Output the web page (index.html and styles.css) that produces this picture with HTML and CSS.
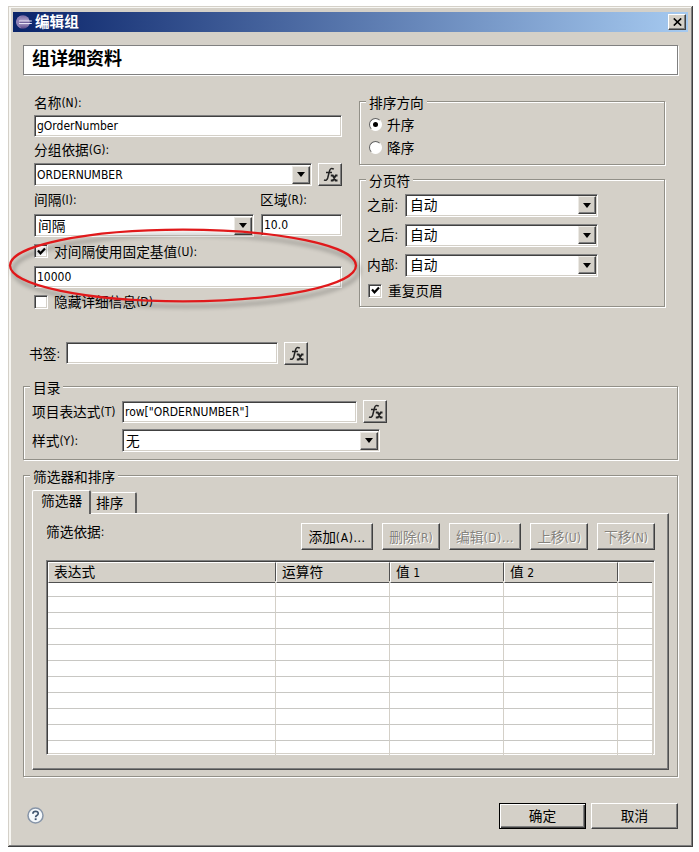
FILE: index.html
```html
<!DOCTYPE html>
<html lang="zh-CN">
<head>
<meta charset="utf-8">
<title>编辑组</title>
<link rel="stylesheet" href="styles.css">
</head>
<body>
<div class="dialog">
  <header class="titlebar">
    <svg class="logo" viewBox="0 0 16 16"><defs><linearGradient id="lg" x1="0" y1="0" x2="0" y2="1"><stop offset="0" stop-color="#7466a2"/><stop offset=".5" stop-color="#b9add2"/><stop offset="1" stop-color="#564485"/></linearGradient></defs><circle cx="7" cy="8" r="6.800" fill="url(#lg)"/><path d="M5.500 1.400Q0 3 .2 8.200Q1 13 5.500 14.600Q3 12 3 8T5.500 1.400Z" fill="#8f80b5"/><path d="M3 7H15.800M3 9.500H15.800" stroke="#e9e4f4" stroke-width="1.200"/><path d="M3.500 8.250H14" stroke="#5c4d8c" stroke-width="1"/></svg>
    <h1>编辑组</h1>
    <button class="close"><svg viewBox="0 0 9 8"><path d="M.8.500 8.200 7.500M8.200.500.8 7.500" stroke="#000" stroke-width="1.700"/></svg></button>
  </header>
  <div class="banner">组详细资料</div>

  <main class="columns">
    <section class="left">
      <label class="h25">名称<i>(N):</i></label>
      <div class="field"><i>gOrderNumber</i></div>
      <label class="h26">分组依据<i>(G):</i></label>
      <div class="line">
        <div class="combo w278"><i>ORDERNUMBER</i><span class="arrow"></span></div>
        <button class="fx"><svg viewBox="0 0 18 18"><path d="M12.800 3.200Q9.500 1.200 8.500 5L6.700 12Q5.800 15.200 3 13.800M5 6.500H11" fill="none" stroke="#222" stroke-width="1.500"/><path d="M9.800 9.500h2l2.700 5h2M16.500 9.500h-1.800l-2.900 5H9.800" fill="none" stroke="#222" stroke-width="1.800"/></svg></button>
      </div>
      <div class="line h28"><label class="w226">间隔<i>(I):</i></label><label>区域<i>(R):</i></label></div>
      <div class="line">
        <div class="combo w220"><span class="value">间隔</span><span class="arrow"></span></div>
        <div class="field w80"><i>10.0</i></div>
      </div>
      <label class="check h29"><span class="box"><svg viewBox="0 0 9 9"><path d="M1 3.500 3.500 6.300 8 1.500" fill="none" stroke="#000" stroke-width="2.200"/></svg></span>对间隔使用固定基值<i>(U):</i></label>
      <div class="field"><i>10000</i></div>
      <label class="check h28"><span class="box"></span>隐藏详细信息<i>(D)</i></label>
    </section>

    <section class="right">
      <div class="group sort">
        <div class="legend">排序方向</div>
        <label class="choice"><span class="radio on"></span>升序</label>
        <label class="choice"><span class="radio"></span>降序</label>
      </div>
      <div class="group breaks">
        <div class="legend">分页符</div>
        <div class="pair"><label>之前<i>:</i></label><div class="combo"><span class="value">自动</span><span class="arrow"></span></div></div>
        <div class="pair"><label>之后<i>:</i></label><div class="combo"><span class="value">自动</span><span class="arrow"></span></div></div>
        <div class="pair"><label>内部<i>:</i></label><div class="combo"><span class="value">自动</span><span class="arrow"></span></div></div>
        <label class="check repeat"><span class="box"><svg viewBox="0 0 9 9"><path d="M1 3.500 3.500 6.300 8 1.500" fill="none" stroke="#000" stroke-width="2.200"/></svg></span>重复页眉</label>
      </div>
    </section>
  </main>

  <div class="bookmark">
    <label>书签<i>:</i></label>
    <div class="field"></div>
    <button class="fx"><svg viewBox="0 0 18 18"><path d="M12.800 3.200Q9.500 1.200 8.500 5L6.700 12Q5.800 15.200 3 13.800M5 6.500H11" fill="none" stroke="#222" stroke-width="1.500"/><path d="M9.800 9.500h2l2.700 5h2M16.500 9.500h-1.800l-2.900 5H9.800" fill="none" stroke="#222" stroke-width="1.800"/></svg></button>
  </div>

  <div class="group toc">
    <div class="legend">目录</div>
    <div class="trow"><label>项目表达式<i>(T)</i></label><div class="field"><i>row["ORDERNUMBER"]</i></div><button class="fx"><svg viewBox="0 0 18 18"><path d="M12.800 3.200Q9.500 1.200 8.500 5L6.700 12Q5.800 15.200 3 13.800M5 6.500H11" fill="none" stroke="#222" stroke-width="1.500"/><path d="M9.800 9.500h2l2.700 5h2M16.500 9.500h-1.800l-2.900 5H9.800" fill="none" stroke="#222" stroke-width="1.800"/></svg></button></div>
    <div class="trow"><label>样式<i>(Y):</i></label><div class="combo"><span class="value">无</span><span class="arrow"></span></div></div>
  </div>

  <div class="group filters">
    <div class="legend">筛选器和排序</div>
    <div class="tabs"><div class="tab active">筛选器</div><div class="tab">排序</div></div>
    <div class="panel">
      <div class="toolbar">
        <label>筛选依据<i>:</i></label>
        <button class="btn w72">添加<i>(A)...</i></button>
        <button class="btn off w58">删除<i>(R)</i></button>
        <button class="btn off w72">编辑<i>(D)...</i></button>
        <button class="btn off w58">上移<i>(U)</i></button>
        <button class="btn off w58">下移<i>(N)</i></button>
      </div>
      <div class="table">
        <div class="tr head"><div>表达式</div><div>运算符</div><div>值<i> 1</i></div><div>值<i> 2</i></div><div></div></div>
        <div class="tr first"><div></div><div></div><div></div><div></div><div></div></div>
        <div class="tr"><div></div><div></div><div></div><div></div><div></div></div>
        <div class="tr"><div></div><div></div><div></div><div></div><div></div></div>
        <div class="tr"><div></div><div></div><div></div><div></div><div></div></div>
        <div class="tr"><div></div><div></div><div></div><div></div><div></div></div>
        <div class="tr"><div></div><div></div><div></div><div></div><div></div></div>
        <div class="tr"><div></div><div></div><div></div><div></div><div></div></div>
        <div class="tr"><div></div><div></div><div></div><div></div><div></div></div>
        <div class="tr"><div></div><div></div><div></div><div></div><div></div></div>
        <div class="tr"><div></div><div></div><div></div><div></div><div></div></div>
        <div class="tr last"><div></div><div></div><div></div><div></div><div></div></div>
      </div>
    </div>
  </div>

  <footer class="footer">
    <svg class="help" viewBox="0 0 17 17"><circle cx="8.500" cy="8.500" r="7.500" fill="#f5f9fc" stroke="#8795a8" stroke-width="1.500"/><path d="M5.900 6.700Q6 4.400 8.600 4.400T11.200 6.500Q11.200 7.700 9.800 8.500 8.600 9.200 8.600 10.300" fill="none" stroke="#40566f" stroke-width="1.700"/><rect x="7.700" y="11.300" width="1.900" height="1.800" fill="#40566f"/></svg>
    <button class="btn default">确定</button>
    <button class="btn">取消</button>
  </footer>

  <svg class="callout" viewBox="0 0 360 86"><ellipse cx="177" cy="40.500" rx="173" ry="35.800" fill="none" stroke="#e0191b" stroke-width="2.300"/></svg>
</div>
</body>
</html>
```

FILE: styles.css
```css
* { box-sizing: border-box; }

body {
  margin: 0;
  background: #fff;
  color: #000;
  font: 13.7px/18px "Noto Sans CJK SC", sans-serif;
}

i {
  font: normal 12px/18px "DejaVu Sans Condensed", "DejaVu Sans", sans-serif;
  font-stretch: condensed;
  white-space: pre;
}

button { font: inherit; color: inherit; padding: 0; margin: 0; }

label { display: flex; align-items: center; white-space: nowrap; padding-bottom: 2px; }
label i { padding-top: 2px; }

.dialog {
  position: relative;
  width: 685px;
  height: 841px;
  margin: 6px 0 0 8px;
  padding: 6px 5px 0;
  background: #d4d0c8;
  box-shadow: inset -1px -1px #404040, inset 1px 1px #d4d0c8, inset -2px -2px #808080, inset 3px 2px #f7f6f2;
}

.titlebar {
  display: flex;
  align-items: center;
  height: 20px;
  padding: 0 2px 0 3px;
  background: linear-gradient(90deg, #0a246a, #a6caf0);
  color: #fff;
}
.logo { width: 16px; height: 16px; }
.titlebar h1 { margin: 0 auto 0 3px; font-size: 14.6px; line-height: 18px; padding-bottom: 2px; font-weight: 700; }
.close {
  display: flex;
  align-items: center;
  justify-content: center;
  width: 18px;
  height: 16px;
  background: #d4d0c8;
  border: 1px solid;
  border-color: #fff #404040 #404040 #fff;
  box-shadow: inset -1px -1px #808080;
}
.close svg { width: 9px; height: 8px; }

.banner {
  height: 30px;
  margin: 13px 10px 0;
  padding-left: 8px;
  background: #fff;
  border: 1px solid #808080;
  box-shadow: 1px 1px #fff;
  font-size: 18px;
  font-weight: 700;
  line-height: 22px;
}

.columns { display: flex; gap: 17px; height: 267px; padding: 15px 0 0 21px; }
.left { width: 308px; }
.right { width: 306px; padding-top: 11px; }
.line { display: flex; justify-content: space-between; }
.h25 { height: 25px; }
.h26 { height: 26px; }
.h28 { height: 28px; }
.h29 { height: 29px; }
.w226 { width: 226px; }
.line.h28 { justify-content: flex-start; }

.field, .combo {
  display: flex;
  align-items: center;
  height: 22px;
  padding-left: 2px;
  background: #fff;
  border: 1px solid;
  border-color: #808080 #fff #fff #808080;
  box-shadow: inset 1px 1px #404040, inset -1px -1px #d4d0c8;
}
.combo { height: 23px; justify-content: space-between; padding: 0 1px 0 2px; }
.value { padding: 0 0 2px 1px; }
.w278 { width: 278px; }
.w220 { width: 220px; }
.w80 { width: 81px; }

.arrow {
  display: flex;
  align-items: center;
  justify-content: center;
  width: 18px;
  height: 18px;
  background: #d4d0c8;
  border: 1px solid;
  border-color: #eceae5 #404040 #404040 #eceae5;
  box-shadow: inset -1px -1px #808080;
}
.arrow::before { content: ""; border: solid transparent; border-width: 5px 4.5px 0; border-top-color: #000; }

.fx {
  display: flex;
  align-items: center;
  justify-content: center;
  width: 24px;
  height: 23px;
  background: #d4d0c8;
  border: 1px solid;
  border-color: #fff #404040 #404040 #fff;
  box-shadow: inset -1px -1px #808080;
}
.fx svg { width: 18px; height: 18px; }

.box {
  display: flex;
  align-items: center;
  justify-content: center;
  width: 14px;
  height: 14px;
  margin: 1px 6px 0 0;
  background: #fff;
  border: 1px solid;
  border-color: #808080 #fff #fff #808080;
  box-shadow: inset 1px 1px #404040, inset -1px -1px #d4d0c8;
}
.box svg { width: 9px; height: 9px; }

.group {
  border: 1px solid #929088;
  box-shadow: 1px 1px #fff, inset 1px 1px #fff;
}
.legend {
  width: max-content;
  height: 18px;
  margin: -8px 0 0 6px;
  padding: 0 3px;
  background: #d4d0c8;
  line-height: 16px;
}
.sort { height: 64px; }
.choice { height: 23px; padding: 0 0 1px 9px; }
.sort .legend + .choice { margin-top: 1px; }
.radio {
  display: flex;
  align-items: center;
  justify-content: center;
  width: 13px;
  height: 13px;
  margin-right: 5px;
  border-radius: 50%;
  background: #fff;
  border: 1px solid;
  border-color: #606060 #fff #fff #606060;
}
.on::before { content: ""; width: 5px; height: 5px; border-radius: 50%; background: #000; }

.breaks { height: 128px; margin-top: 14px; padding-left: 7px; }
.breaks .legend { margin-left: -1px; }
.pair { display: flex; align-items: center; height: 30px; }
.pair label { width: 38px; }
.pair .combo { width: 193px; padding-left: 3px; }
.repeat { height: 22px; padding-left: 1px; }

.bookmark { display: flex; padding-left: 16px; height: 23px; }
.bookmark label { width: 37px; }
.bookmark .field { width: 212px; margin-right: 6px; }

.toc { height: 74px; margin: 21px 10px 0; padding-left: 8px; }
.toc .legend, .filters .legend { margin-left: -2px; }
.trow { display: flex; align-items: center; height: 29px; }
.trow label { width: 90px; }
.trow .field { width: 235px; margin-right: 6px; }
.trow .combo { width: 258px; }

.filters { height: 302px; margin: 15px 10px 0; padding: 0 8px; }
.tabs { display: flex; align-items: flex-end; height: 24px; margin-top: 4px; }
.tab {
  width: 46px;
  height: 21px;
  padding: 0 0 0 4px;
  border: 1px solid;
  border-color: #fff #606060 transparent transparent;
  border-right-width: 2px;
  border-bottom: 0;
  border-radius: 2px 2px 0 0;
  margin-bottom: 1px;
}
.tab.active {
  position: relative;
  z-index: 1;
  width: 59px;
  height: 24px;
  margin-bottom: 0;
  padding: 0 0 0 8px;
  background: #d4d0c8;
  border-left-color: #fff;
}
.panel {
  height: 257px;
  margin-top: -1px;
  padding: 9px 13px 0 13px;
  border: 1px solid;
  border-color: #fff #505050 #505050 #fff;
  box-shadow: inset -1px -1px #808080;
}
.toolbar { display: flex; gap: 9px; height: 27px; }
.toolbar label { margin-right: auto; height: 18px; }
.btn {
  height: 27px;
  background: #d4d0c8;
  border: 1px solid;
  border-color: #fff #404040 #404040 #fff;
  box-shadow: inset -1px -1px #808080;
  line-height: 23px;
  padding-bottom: 1px;
  white-space: nowrap;
}
.w72 { width: 72px; }
.w58 { width: 58px; }
.w72 i { letter-spacing: .6px; }
.off { color: #85837d; text-shadow: 1px 1px #fff; }

.table {
  height: 195px;
  margin-top: 10px;
  background: #fff;
  border: 1px solid;
  border-color: #808080 #fff #fff #808080;
  box-shadow: inset 1px 1px #404040, inset -1px -1px #d4d0c8;
  padding: 1px 1px 0 1px;
}
.tr { display: grid; grid-template-columns: 228px 114px 114px 114px 1fr; height: 16px; }
.tr div { border-right: 1px solid #d4d0c8; border-bottom: 1px solid #c8c7c3; }
.tr.last div { border-bottom: 0; }
.tr.head { height: 19px; }
.head div {
  padding-left: 5px;
  background: #d4d0c8;
  border: 1px solid;
  border-color: #fff #505050 #505050 #fff;
  line-height: 17px;
}
.head div:last-child { border-right-color: #d4d0c8; }

.footer { display: flex; margin: 26px 10px 0; gap: 5px; }
.help { width: 17px; height: 17px; margin: 4px auto 0 4px; }
.footer .btn { width: 87px; height: 26px; padding-bottom: 2px; line-height: 20px; }
.footer .default { border-color: #000; box-shadow: inset 1px 1px #fff, inset -1px -1px #404040, inset -2px -2px #808080; }

.callout {
  position: absolute;
  left: -2px;
  top: 219px;
  width: 360px;
  height: 86px;
  overflow: visible;
  filter: drop-shadow(3px 5px 2px rgba(0, 0, 0, .35));
}
```
